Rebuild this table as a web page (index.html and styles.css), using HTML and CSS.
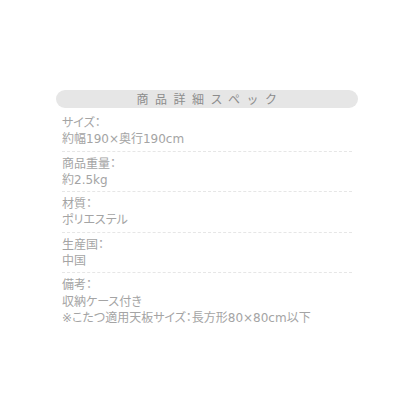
FILE: index.html
```html
<!DOCTYPE html>
<html lang="ja">
<head>
<meta charset="utf-8">
<link rel="stylesheet" href="styles.css">
</head>
<body>
<div class="spec">
  <div class="spec-title">商品詳細スペック</div>
  <ul class="spec-list">
    <li class="spec-row"><div>サイズ：</div><div>約幅190×奥行190cm</div></li>
    <li class="spec-row"><div>商品重量：</div><div>約2.5kg</div></li>
    <li class="spec-row"><div>材質：</div><div>ポリエステル</div></li>
    <li class="spec-row"><div>生産国：</div><div>中国</div></li>
    <li class="spec-row last"><div>備考：</div><div>収納ケース付き</div><div>※こたつ適用天板サイズ：長方形80×80cm以下</div></li>
  </ul>
</div>
</body>
</html>
```
FILE: styles.css
```css
html, body {
  margin: 0;
  padding: 0;
  background: #ffffff;
}
body {
  font-family: "DejaVu Sans", "Noto Sans CJK JP", sans-serif;
  color: #a4a4a4;
}
.spec {
  width: 302px;
  margin: 90px 0 0 56px;
}
.spec-title {
  height: 18px;
  line-height: 18px;
  background: #e6e6e6;
  border-radius: 9px;
  text-align: center;
  font-family: "Noto Sans CJK JP", sans-serif;
  font-size: 12px;
  letter-spacing: 6.5px;
  padding-left: 6px;
  color: #8c8c8c;
}
.spec-list {
  list-style: none;
  margin: 0 6px;
  padding: 4px 0 0;
}
.spec-row {
  font-size: 12px;
  line-height: 16.3px;
  padding: 3px 0 3px;
  border-bottom: 1px dashed #e6e6e6;
  font-feature-settings: "palt";
}
.spec-row + .spec-row {
  padding-top: 4px;
}
.spec-row.last {
  border-bottom: none;
}
```
